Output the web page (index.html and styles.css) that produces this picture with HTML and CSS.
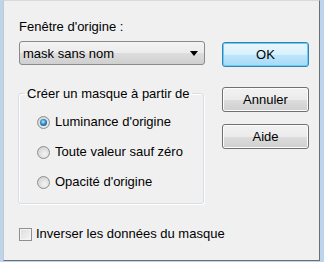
FILE: index.html
```html
<!DOCTYPE html>
<html lang="fr">
<head>
  <meta charset="UTF-8">
  <title>Nouveau masque</title>
  <link rel="stylesheet" href="styles.css">
</head>
<body>

  <div class="dialog">
    <div class="left">
      <div class="label">Fenêtre d'origine :</div>
      <div class="combo">
        <span>mask sans nom</span>
        <span class="arrow"></span>
      </div>

      <fieldset class="group">
        <legend>Créer un masque à partir de</legend>
        <label class="option"><span class="radio checked"></span>Luminance d'origine</label>
        <label class="option"><span class="radio"></span>Toute valeur sauf zéro</label>
        <label class="option"><span class="radio"></span>Opacité d'origine</label>
      </fieldset>

      <label class="check-row"><span class="checkbox"></span>Inverser les données du masque</label>
    </div>

    <div class="right">
      <button class="btn default">OK</button>
      <button class="btn cancel">Annuler</button>
      <button class="btn help">Aide</button>
    </div>
  </div>

</body>
</html>
```

FILE: styles.css
```css
html, body {
  margin: 0;
  height: 100%;
}

body {
  background: #bcd4ec;
  font-family: 'Liberation Sans', Arial, sans-serif;
  font-size: 13px;
  color: #000;
  white-space: nowrap;
}

.dialog {
  box-sizing: border-box;
  width: 317px;
  height: 261px;
  margin-left: 3px;
  background: #f0f0f0;
  border-top: 1px solid #d9d9d9;
  border-left: 1px solid #c8c8c8;
  border-right: 1px solid #6e6e6e;
  border-bottom: 1px solid #6e6e6e;
  display: flex;
  gap: 17px;
  padding: 18px 0 0 15px;
}

.left {
  width: 186px;
  flex-shrink: 0;
  display: flex;
  flex-direction: column;
}

.label {
  line-height: 16px;
}

.combo {
  margin-top: 6px;
  height: 24px;
  box-sizing: border-box;
  border: 1px solid #8a8a8a;
  border-radius: 3px;
  background: linear-gradient(#f3f3f3, #ebebeb 50%, #dddddd 51%, #cfcfcf);
  display: flex;
  align-items: center;
  justify-content: space-between;
  padding: 0 6px 0 3px;
}

.arrow {
  width: 0;
  height: 0;
  border-left: 4px solid transparent;
  border-right: 4px solid transparent;
  border-top: 5px solid #000;
}

.group {
  margin: 21px 0 0 -1px;
  width: 186px;
  box-sizing: border-box;
  border: 1px solid #d5dfe5;
  border-radius: 3px;
  box-shadow: 1px 1px 0 #fff, inset 1px 1px 0 #fff;
  padding: 13px 0 13px 18px;
  display: flex;
  flex-direction: column;
  gap: 14px;
}

.group legend {
  padding: 0 2px;
  margin-left: -12px;
  line-height: 15px;
}

.option {
  display: flex;
  align-items: center;
  line-height: 16px;
}

.radio {
  flex-shrink: 0;
  width: 11px;
  height: 11px;
  border: 1px solid #8c8e90;
  border-radius: 50%;
  background: radial-gradient(circle at 60% 65%, #f4f4f4, #d6d6d6 70%, #c4c4c4);
  margin-right: 5px;
  position: relative;
}

.radio.checked::after {
  content: "";
  position: absolute;
  left: 2px;
  top: 2px;
  width: 7px;
  height: 7px;
  border-radius: 50%;
  background: radial-gradient(circle at 45% 40%, #bfeaff, #2c8ccb 45%, #0d3e68);
}

.check-row {
  margin-top: 22px;
  display: flex;
  align-items: center;
  line-height: 16px;
}

.checkbox {
  flex-shrink: 0;
  width: 11px;
  height: 11px;
  border: 1px solid #8e8f8f;
  background: linear-gradient(135deg, #dcdcdc, #f6f6f6);
  box-shadow: inset 0 0 0 1px #f4f4f4;
  margin-right: 4px;
}

.right {
  display: flex;
  flex-direction: column;
  padding-top: 23px;
}

.btn {
  width: 87px;
  height: 25px;
  font: inherit;
  color: #000;
  border: 1px solid #707070;
  border-radius: 3px;
  background: linear-gradient(#f2f2f2, #ebebeb 50%, #dddddd 51%, #cfcfcf);
  box-shadow: inset 0 0 0 1px #fcfcfc;
  padding: 0;
}

.btn.default {
  border-color: #3c7fb1;
  background: linear-gradient(#eaf6fd, #d9f0fc 50%, #bee6fd 51%, #a7d9f5);
  box-shadow: inset 0 0 0 1px #5fd1f7;
}

.cancel {
  margin-top: 20px;
}

.help {
  margin-top: 12px;
}
```
